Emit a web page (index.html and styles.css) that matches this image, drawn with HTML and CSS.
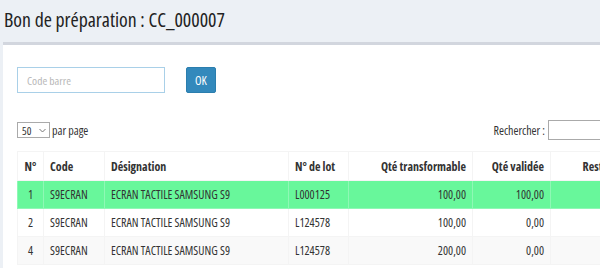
FILE: index.html
```html
<!DOCTYPE html>
<html>
<head>
  <meta charset="utf-8">
  <title>Bon de préparation</title>
  <link rel="stylesheet" href="styles.css">
</head>
<body>
  <div class="content-header">
    <h1>Bon de préparation : CC_000007</h1>
  </div>

  <div class="box">
    <div class="barcode-form">
      <input type="text" class="barcode-input" placeholder="Code barre">
      <button class="btn-ok">OK</button>
    </div>

    <div class="table-controls">
      <div class="length-control">
        <span class="fake-select">
          50
          <svg width="7" height="5" viewBox="0 0 7 5"><polyline points="0.5,1 3.5,4 6.5,1" fill="none" stroke="#777" stroke-width="1"/></svg>
        </span>
        <span>par page</span>
      </div>
      <div class="search-control">
        <label>Rechercher :</label>
        <input type="text" class="search-input">
      </div>
    </div>

    <table class="data-table">
      <thead>
        <tr>
          <th class="col-num center">N°</th>
          <th class="col-code">Code</th>
          <th class="col-desig">Désignation</th>
          <th class="col-lot">N° de lot</th>
          <th class="col-qt num">Qté transformable</th>
          <th class="col-qv num">Qté validée</th>
          <th class="col-rest num">Reste</th>
        </tr>
      </thead>
      <tbody>
        <tr class="validated">
          <td class="center">1</td>
          <td>S9ECRAN</td>
          <td>ECRAN TACTILE SAMSUNG S9</td>
          <td>L000125</td>
          <td class="num">100,00</td>
          <td class="num">100,00</td>
          <td></td>
        </tr>
        <tr>
          <td class="center">2</td>
          <td>S9ECRAN</td>
          <td>ECRAN TACTILE SAMSUNG S9</td>
          <td>L124578</td>
          <td class="num">100,00</td>
          <td class="num">0,00</td>
          <td></td>
        </tr>
        <tr class="odd">
          <td class="center">4</td>
          <td>S9ECRAN</td>
          <td>ECRAN TACTILE SAMSUNG S9</td>
          <td>L124578</td>
          <td class="num">200,00</td>
          <td class="num">0,00</td>
          <td></td>
        </tr>
      </tbody>
    </table>
  </div>
</body>
</html>
```

FILE: styles.css
```css
html, body {
  overflow: hidden;
}
body {
  margin: 0;
  padding: 0;
  background-color: #ecf0f5;
  color: #333;
  font-family: 'Open Sans', 'Noto Sans', sans-serif;
  font-stretch: 75%;
  font-size: 12px;
}

/* Page title */
.content-header {
  box-sizing: border-box;
  height: 42px;
  padding: 6px 5px 0 4px;
}
h1 {
  margin: 0;
  font-size: 19.8px;
  font-weight: normal;
  color: #222;
}

/* Main box */
.box {
  margin-left: 3px;
  width: 720px;
  background-color: #fff;
  border-top: 3px solid #d2d6de;
  padding: 22px 14px 10px 14px;
}
.barcode-form {
  display: flex;
  align-items: center;
  gap: 21px;
}
.barcode-input {
  box-sizing: border-box;
  width: 148px;
  height: 26px;
  border: 1px solid #a9d0e8;
  padding: 0 9px;
  font-family: inherit;
  font-stretch: 75%;
  font-size: 11.5px;
  color: #555;
  outline: none;
}
.barcode-input::placeholder {
  color: #b8b8b8;
}
.btn-ok {
  box-sizing: border-box;
  width: 30px;
  height: 26px;
  padding: 0;
  border: 1px solid #2b7eae;
  border-radius: 2px;
  background-color: #3389bc;
  color: #fff;
  font-family: inherit;
  font-stretch: 75%;
  font-size: 12px;
}

/* Length + search */
.table-controls {
  display: flex;
  justify-content: space-between;
  align-items: center;
  margin-top: 27px;
  width: 586px;
  height: 20px;
}
.length-control {
  display: flex;
  align-items: center;
  gap: 2px;
}
.fake-select {
  box-sizing: border-box;
  display: inline-flex;
  justify-content: space-between;
  align-items: center;
  width: 33px;
  height: 16px;
  border: 1px solid #aaa;
  padding: 0 3px 0 4px;
  font-size: 11px;
}
.search-control {
  display: flex;
  align-items: center;
  gap: 3px;
  margin-right: -5px;
}
.search-input {
  box-sizing: border-box;
  width: 60px;
  height: 20px;
  border: 1px solid #aaa;
  outline: none;
}

/* Table */
.data-table {
  margin-top: 11px;
  border-collapse: collapse;
  table-layout: fixed;
  width: 597px;
  border-top: 1px solid #f4f4f4;
}
.data-table th,
.data-table td {
  box-sizing: border-box;
  border: 1px solid #f4f4f4;
  border-top: none;
  height: 28px;
  padding: 0 6px;
  text-align: left;
  white-space: nowrap;
  overflow: hidden;
}
.data-table th {
  font-weight: bold;
  height: 29px;
}
.data-table .num {
  text-align: right;
}
.data-table .center {
  text-align: center;
}
.col-num { width: 26px; }
.col-code { width: 61px; }
.col-desig { width: 184px; }
.col-lot { width: 60px; }
.col-qt { width: 124px; }
.col-qv { width: 78px; }
.col-rest { width: 64px; }

tr.validated td {
  background-color: #68f79b;
  border-color: #8ff8b5;
}
tr.odd td {
  background-color: #f9f9f9;
}
```
